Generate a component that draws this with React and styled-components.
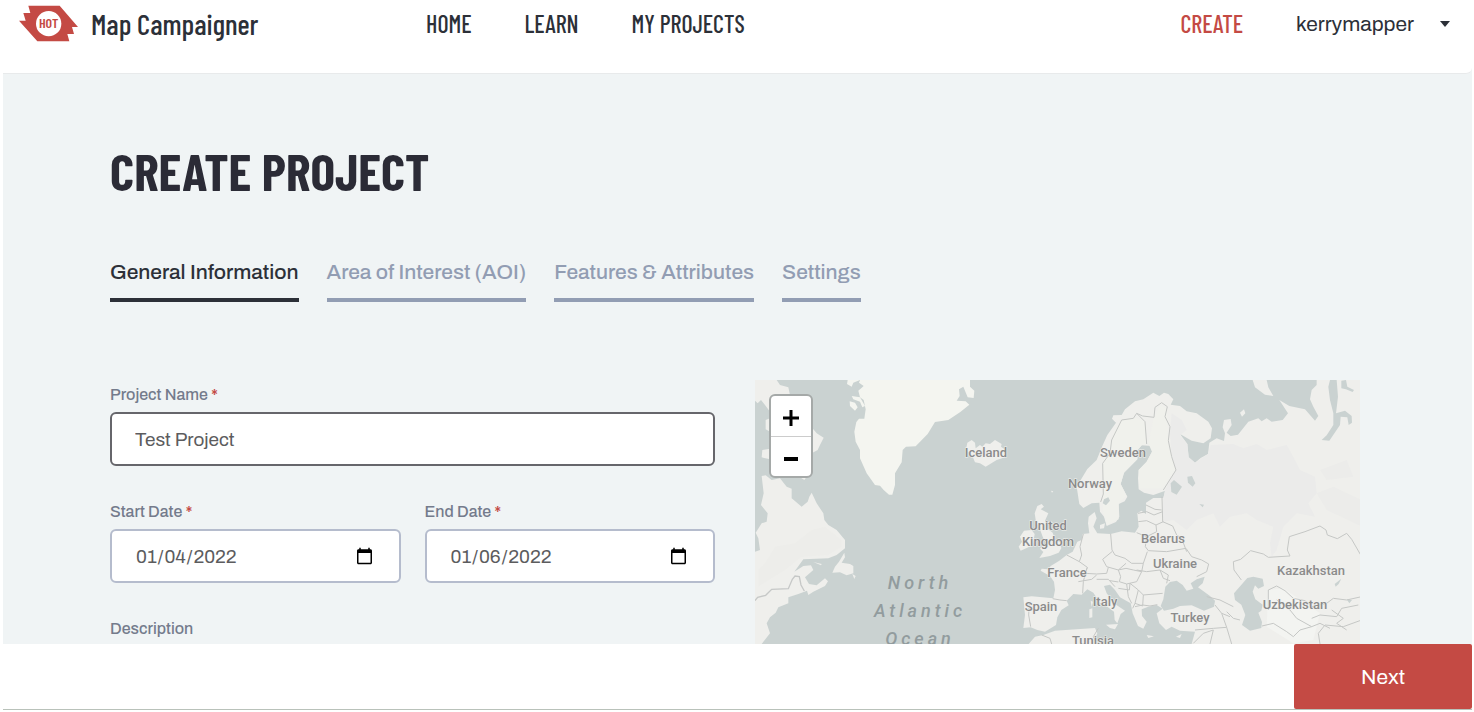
import React, { useState } from "react";
import styled, { createGlobalStyle } from "styled-components";

const color = {
  red: "#c44a44",
  ink: "#2c3038",
  title: "#2b2b36",
  muted: "#929db3",
  label: "#747b8c",
  page: "#f0f4f5",
};

const condensed = `"Barlow Condensed", "Roboto Condensed", "Liberation Sans Narrow", "Liberation Sans", sans-serif`;

const GlobalStyle = createGlobalStyle`
  *, *::before, *::after { box-sizing: border-box; }
  body {
    margin: 0;
    background: #fff;
    color: ${color.ink};
    font-family: Archivo, "Liberation Sans", Arial, sans-serif;
  }
  button, input, textarea { font-family: inherit; }
`;

const Page = styled.div`
  display: flex;
  flex-direction: column;
  height: 100vh;
  padding: 0 2px 2px 3px;
`;

const Header = styled.header`
  flex: none;
  display: flex;
  align-items: center;
  height: 74px;
  padding: 0 22px 26px 16px;
  background: #fff;
  border-bottom: 1px solid #e8eaeb;
  border-radius: 0 0 6px 0;
`;

const HeaderBack = styled.div`
  flex: none;
  background: ${color.page};
`;

const Brand = styled.a`
  display: flex;
  align-items: center;
  gap: 12px;
  width: 407px;
  color: ${color.ink};
  font: 500 29px/32px ${condensed};
  text-decoration: none;
`;

const Nav = styled.nav`
  display: flex;
  gap: 53px;
  flex: 1;
`;

const NavLink = styled.a`
  color: ${(p) => (p.$accent ? color.red : color.ink)};
  font: 500 24px/32px ${condensed};
  text-decoration: none;
`;

const Account = styled.div`
  display: flex;
  align-items: center;
  gap: 53px;
`;

const UserMenu = styled.button`
  display: flex;
  align-items: center;
  gap: 26px;
  padding: 0;
  border: 0;
  background: none;
  color: ${color.ink};
  font-size: 21px;
  line-height: 24px;
`;

const Main = styled.main`
  flex: 1;
  min-height: 0;
  overflow: hidden;
  padding: 64px 112px 0 107px;
  background: ${color.page};
`;

const Title = styled.h1`
  margin: 0;
  color: ${color.title};
  font: 700 52px/64px ${condensed};
`;

const Tabs = styled.div`
  display: flex;
  gap: 28px;
  margin-top: 56px;
`;

const Tab = styled.button`
  padding: 0 0 12px;
  border: 0;
  border-bottom: 4px solid currentColor;
  background: none;
  color: ${(p) => (p.$active ? color.ink : color.muted)};
  font-weight: 500;
  font-size: 21px;
  line-height: 28px;
`;

const Columns = styled.div`
  display: grid;
  grid-template-columns: 1fr 1fr;
  gap: 40px;
  align-items: start;
  margin-top: 78px;
`;

const Form = styled.form`
  display: flex;
  flex-direction: column;
  gap: 36px;
  padding-top: 5px;
`;

const DateRow = styled.div`
  display: grid;
  grid-template-columns: 1fr 1fr;
  gap: 24px;
`;

const Field = styled.div`
  display: flex;
  flex-direction: column;
  gap: 7px;
`;

const Label = styled.label`
  color: ${color.label};
  font-size: 16px;
  font-weight: 500;
  line-height: 20px;
`;

const Required = styled.span`
  color: ${color.red};
  font-weight: 700;
`;

const Input = styled.input`
  width: 100%;
  height: 54px;
  padding: 0 23px;
  border: 2px solid #b5bccd;
  border-radius: 6px;
  background: #fff;
  color: #5c5c5e;
  font-size: 19px;
  outline: none;
  &:focus { border-color: #66666b; }
`;

const TextArea = styled(Input).attrs({ as: "textarea" })`
  height: 120px;
  padding: 12px 23px;
  resize: none;
`;

const MapFrame = styled.div`
  position: relative;
  overflow: hidden;
  background: #cad2d1;
`;

const MapSvg = styled.svg`
  display: block;
  width: 100%;
  height: auto;
`;

const ZoomControl = styled.div`
  position: absolute;
  top: 14px;
  left: 14px;
  display: flex;
  flex-direction: column;
  width: 44px;
  border: 2px solid #a5a9a8;
  border-radius: 6px;
  background: #fff;
`;

const ZoomButton = styled.button`
  display: flex;
  align-items: center;
  justify-content: center;
  height: 40px;
  padding: 4px 0 0;
  border: 0;
  background: none;
  color: #000;
  & + & { border-top: 1px solid #ccc; }
`;

const Footer = styled.footer`
  flex: none;
  display: flex;
  justify-content: flex-end;
  height: 66px;
  border-bottom: 1px solid #b9c2ba;
  background: #fff;
`;

const NextButton = styled.button`
  width: 178px;
  border: 0;
  border-radius: 2px;
  background: ${color.red};
  color: #fff;
  font-size: 21px;
`;

const Logo = () => (
  <svg width="60" height="37" viewBox="0 0 180 111" aria-hidden="true">
    <path
      d="M28 2H122L177 66H159L165 87H145L151 109H55L0 47H20L13 24H34Z"
      fill={color.red}
    />
    <circle cx="89" cy="56" r="38" fill="#fff" />
    <text x="89" y="70" textAnchor="middle" fill={color.red} fontFamily={condensed} fontWeight="600" fontSize="42">
      HOT
    </text>
  </svg>
);

const places = [
  ["Iceland", 231, 77],
  ["Sweden", 368, 77],
  ["Norway", 335, 108],
  ["United", 293, 150],
  ["Kingdom", 293, 166],
  ["Belarus", 408, 163],
  ["Ukraine", 420, 188],
  ["France", 312, 197],
  ["Kazakhstan", 556, 195],
  ["Uzbekistan", 540, 229],
  ["Spain", 286, 231],
  ["Italy", 350, 226],
  ["Turkey", 435, 242],
  ["Tunisia", 338, 265],
];

const oceanLines = [
  ["North", 165, 209],
  ["Atlantic", 165, 237],
  ["Ocean", 165, 265],
];

const PlaceName = styled.text`
  fill: #8b8b8b;
  stroke: #f2f2f0;
  stroke-width: 1px;
  paint-order: stroke;
  font: 500 13px Roboto, "Liberation Sans", sans-serif;
  text-anchor: middle;
`;

const OceanName = styled.text`
  fill: #929c9e;
  font: italic 500 18px Roboto, "Liberation Sans", sans-serif;
  letter-spacing: 4px;
  text-anchor: middle;
`;

const WorldMap = () => (
  <MapSvg viewBox="0 0 605 400" role="img" aria-label="World map">
    <rect width="605" height="400" fill="#cad2d1" />
    <g transform="translate(-10 -10) scale(0.33333)" fill="#efefec">
      <path d="M30 30H95L105 45L130 52L135 75L90 95L75 125L60 105L48 90L38 100L30 92ZM200 172L215 190L236 203L225 225L218 240L200 250ZM62 150L75 145V185L62 178ZM52 240L75 236V268L50 262ZM165 322L185 320L178 330Z" />
      <path d="M50 318L62 316L80 330L105 325L125 350L140 356V385L170 410L188 395L193 380L200 368L215 400L235 430L238 450L250 465L275 480L300 510V535L275 555L250 565L175 568L148 605L175 588L198 586L205 600L180 622L192 642L215 646L240 625L249 634L240 648L205 665L190 675L186 662L160 672L130 682V700L100 712L92 728L75 742L65 760L75 790L50 822L30 900V545L45 540L40 505L32 488L50 460L65 455L68 430L48 405L56 370Z" />
      <path d="M298 548L300 562L290 578L315 582L325 588V610L305 616L285 607L262 608L270 590L282 575ZM322 612L332 618L328 627ZM205 576L230 582L228 586Z" />
      <path d="M342 38L356 48L340 62L345 82L356 90L362 118L358 146L342 146L334 156L328 185L332 215L345 240V265L365 310L390 345L405 347L416 360L432 374H442L450 345V310L470 277L473 240L483 230L512 229L548 192L570 156L610 150L646 126L673 104L662 94L635 92L644 78L642 58L655 50L668 82L686 84L688 62L675 50V30H345Z" fill="#f4f5f0" />
      <path d="M308 30H345L325 38L320 50L306 42ZM320 78L345 82L360 108L352 112L345 95L325 88ZM314 94L330 98L338 112L330 122L315 108Z" fill="#f4f5f0" />
      <path d="M663 238L667 218L680 210L690 218L692 235L705 225L712 230L722 220L735 222L750 210L770 222L768 230L783 240L780 262L755 270L722 290L705 280L690 277L683 260Z" />
      <path d="M918 362L925 364L921 368Z" />
      <path d="M193 500L200 491L212 495L213 502L203 498L196 504Z" fill="#cad2d1" />
      <path d="M60 580L90 530L150 520L200 480L240 470L290 510V530L250 555L170 560L120 600L40 650V600Z" fill="#ededea" />
      <path d="M30 692L38 682L62 676L80 658L130 656L142 628L150 618L163 620L168 645L178 663" fill="none" stroke="#c6c8c7" strokeWidth="4" />
    </g>
    <g transform="translate(245 -10) scale(0.33333)" fill="#efefec">
      <path d="M125 402L132 410L122 418L145 430L135 452L145 478L158 488L165 510L180 516L184 535L176 548L150 558L118 564L130 546L120 536L138 520L128 500L120 478L108 455L104 430L112 408ZM60 500L72 482L95 480L104 492L98 526L62 542L56 530L66 515Z" />
      <path
        d="M70 682L95 679L160 685L165 660L162 635L150 618L122 602L125 596L145 598L152 588L178 572L200 555L218 545L232 515L245 510L248 492L268 490L264 460L266 440L284 426L290 445L280 470L292 490L332 492L365 484L405 488L416 470L412 430L424 422L438 432V398L460 384L490 384L496 362L460 375L432 368L416 358L414 325L416 300L440 275L456 245L455 228L425 226L413 240L412 268L372 308L362 342L382 380L374 394L356 402L358 440L348 456L320 468L312 440L300 425L298 398L275 400L250 414L238 402L230 350L262 297L290 270L306 230L322 195L348 158L336 146L340 136L365 135L375 118L405 94L430 88L460 68L478 78L492 68L505 72L520 88L512 104L540 108L560 124L590 130L625 155L636 175L632 205L610 220L575 212L540 192L562 222L566 262L585 278L602 264L624 252L628 218L650 205L672 213L675 190L668 172L672 150L692 147L695 165L680 188L692 198L714 194L745 155L775 145L785 154L800 145L815 155L848 150L864 130L838 90L868 108L915 118L945 152L955 138L940 110L930 88L935 60L950 45V30H1085V1300H580L575 822L585 785L540 782L515 770L498 780L478 760L470 730L488 716L470 705L445 710L425 718L426 738L440 755L430 776L414 768L398 730L392 700L360 682L345 660L330 644L312 648L320 670L345 702L375 722L362 732L352 760L344 750L342 725L322 710L300 698L280 668L262 658L245 674L220 672L200 692L206 706L184 720L172 742L168 765L135 785L112 780L92 772L70 774L75 735Z"
      />
      <path d="M86 822L105 800L130 795L165 782L230 778L285 774L292 790L285 806L300 825L350 835L500 900V1300H30V900ZM318 764L354 762L345 778L330 774ZM268 718L277 715V742L268 744ZM272 692L279 695L275 710ZM300 465L315 460L312 475L300 476ZM440 795L462 799L445 804ZM528 800L545 792L540 804ZM548 648L565 645L572 658L558 656Z" />
      <path d="M758 30H800L805 52L820 78L795 74L765 52ZM720 128L732 118L736 130L726 140Z" />
      <path
        d="M515 130L545 150L560 180L540 195L562 222L566 262L585 278L624 252L632 225L700 222L730 235L770 222L800 240L860 225L880 260L900 300L945 320L950 370L925 400L945 440L890 430L850 470L830 540L815 560L810 520L820 470L770 450L740 430L690 440L660 470L640 430L590 450L560 480L520 450L490 455L487 400L495 360L528 300L515 260L510 190Z"
        fill="#ebebea"
      />
      <path d="M950 370L1000 350L1085 390V470L980 420ZM960 300L1040 270L1060 320L980 330Z" fill="#ececea" />
      <path d="M345 180L365 150L410 145L435 155L440 222L425 226L413 240L412 268L372 308L362 342L380 378L356 402V448L320 464L308 420V280ZM462 142L480 105L500 115L505 210L525 300L490 355L418 355L416 300L440 275L456 245L445 220Z" fill="#f0f1ec" />
      <path d="M805 660L850 655L960 730L940 810L880 820L800 770Z" fill="#f3f4f1" />
      <g fill="#cad2d1">
        <path d="M492 722L482 708L490 688L496 650L510 636L530 632L548 645L560 662L580 656L572 640L590 628L614 620L608 640L594 652L630 678L645 692L642 710L612 722L575 706L540 708L520 716Z" />
        <path d="M702 670L742 624L760 620L788 626L792 648L775 656L765 646L758 665L766 688L788 704L784 722L775 728L786 756L784 774L750 782L726 765L736 735L724 704L705 690Z" />
        <path d="M512 340L522 330L546 350L530 374L514 366ZM562 320L576 318L586 340L578 350L564 338ZM598 402L612 404L608 412ZM312 388L325 382L330 392L318 406L308 400ZM1004 642L1024 626L1016 642L1007 650ZM1040 688L1056 690L1048 700Z" />
        <path d="M990 30H1010L1014 80L1008 130L1035 122L1055 138L1056 158L1046 165L1042 142L1022 140L1020 165L988 212L965 210L980 196L1000 165V130L990 90L985 50ZM1024 32L1038 30L1042 50L1062 60L1058 66L1038 58L1024 55Z" />
      </g>
      <g fill="none" stroke="#c5c7c5" strokeWidth="3" strokeLinejoin="round">
        <path d="M302 396L310 372L308 280L330 250L335 210L350 180L365 150L400 145L410 130L435 155L440 222M410 130L428 138L462 142L465 112L485 98L502 110L495 140L510 170L505 212L515 260L528 300L490 360" />
        <path d="M438 405L465 418L485 420M414 430L440 425L462 435L488 425M415 455L440 452L468 465L490 455M486 380L488 455L518 468L530 495L545 505L560 545M468 465L470 485L440 500L410 488M440 500L436 530L445 542L500 545L558 535L575 560L605 570L626 582L620 605L590 620" />
        <path d="M332 492L336 540L345 555L375 565L395 580L430 580L442 545M336 545L308 568L320 590L355 600L378 580M250 492L240 530L245 555L238 575L210 560L200 555M238 575L262 592L255 615L250 635L248 670M262 592L255 610L290 612L320 610L325 592M235 635L275 628L290 615M290 628L325 628L345 650M355 600L362 620L358 635L380 642L410 635L425 605L400 600L378 595L355 600M425 605L430 580M410 600L440 605L480 600L490 625L510 632M480 600L505 615L500 640M390 640L415 660L430 675L488 670M390 640L388 660L355 655M430 675L428 708L405 700L415 660M405 700L398 715M405 710L428 705L450 708L472 704M158 686L180 690L200 692M88 700L86 735L92 770M80 700L95 702M380 642L385 680L395 700M330 632L355 636" />
        <path d="M724 630L702 600L700 575L722 568L752 542L790 552L805 562L870 558L862 540L868 500L915 485L960 468L978 480L982 495L1012 506L1040 490L1055 508L1085 560" />
        <path d="M805 720V660L830 648L855 662L880 685L915 692L935 710L980 700L1000 685L1040 690L1085 680M830 690L870 720L890 745L935 770L960 760L990 775M935 745L960 735L1010 740L1025 715L1075 705M786 768L820 760L860 785L880 800L900 780L935 770M960 822L955 790L975 765L1030 770L1085 750M620 680L660 690L700 710M645 705L665 730L690 740M585 780L640 775L680 772L695 822M665 730L680 772M680 725L700 745L720 750M580 820L610 790L640 780L630 822M295 775L280 800L290 822M125 795L150 805L155 822M995 720L1030 745L1010 760L1040 780" />
      </g>
    </g>
    {places.map(([name, x, y]) => (
      <PlaceName key={name} x={x} y={y}>{name}</PlaceName>
    ))}
    {oceanLines.map(([name, x, y]) => (
      <OceanName key={name} x={x} y={y}>{name}</OceanName>
    ))}
  </MapSvg>
);

const tabs = ["General Information", "Area of Interest (AOI)", "Features & Attributes", "Settings"];

export default function App() {
  const [tab, setTab] = useState(tabs[0]);
  return (
    <>
      <GlobalStyle />
      <Page>
        <HeaderBack>
          <Header>
            <Brand href="#home">
              <Logo />
              Map Campaigner
            </Brand>
            <Nav>
              <NavLink href="#home">HOME</NavLink>
              <NavLink href="#learn">LEARN</NavLink>
              <NavLink href="#projects">MY PROJECTS</NavLink>
            </Nav>
            <Account>
              <NavLink href="#create" $accent>CREATE</NavLink>
              <UserMenu type="button">
                kerrymapper
                <svg width="10" height="6" viewBox="0 0 10 6" aria-hidden="true">
                  <path d="M0 0H10L5 6Z" fill={color.ink} />
                </svg>
              </UserMenu>
            </Account>
          </Header>
        </HeaderBack>
        <Main>
          <Title>CREATE PROJECT</Title>
          <Tabs role="tablist">
            {tabs.map((t) => (
              <Tab key={t} type="button" role="tab" aria-selected={t === tab} $active={t === tab} onClick={() => setTab(t)}>
                {t}
              </Tab>
            ))}
          </Tabs>
          <Columns>
            <Form>
              <Field>
                <Label htmlFor="name">Project Name <Required>*</Required></Label>
                <Input id="name" type="text" defaultValue="Test Project" autoFocus />
              </Field>
              <DateRow>
                <Field>
                  <Label htmlFor="start">Start Date <Required>*</Required></Label>
                  <Input id="start" type="date" defaultValue="2022-01-04" />
                </Field>
                <Field>
                  <Label htmlFor="end">End Date <Required>*</Required></Label>
                  <Input id="end" type="date" defaultValue="2022-01-06" />
                </Field>
              </DateRow>
              <Field>
                <Label htmlFor="description">Description</Label>
                <TextArea id="description" />
              </Field>
            </Form>
            <MapFrame>
              <WorldMap />
              <ZoomControl>
                <ZoomButton type="button" aria-label="Zoom in">
                  <svg width="18" height="18" viewBox="0 0 18 18"><path d="M9 1V17M1 9H17" stroke="#000" strokeWidth="3" /></svg>
                </ZoomButton>
                <ZoomButton type="button" aria-label="Zoom out">
                  <svg width="18" height="18" viewBox="0 0 18 18"><path d="M2 9H16" stroke="#000" strokeWidth="4" /></svg>
                </ZoomButton>
              </ZoomControl>
            </MapFrame>
          </Columns>
        </Main>
        <Footer>
          <NextButton type="button">Next</NextButton>
        </Footer>
      </Page>
    </>
  );
}
